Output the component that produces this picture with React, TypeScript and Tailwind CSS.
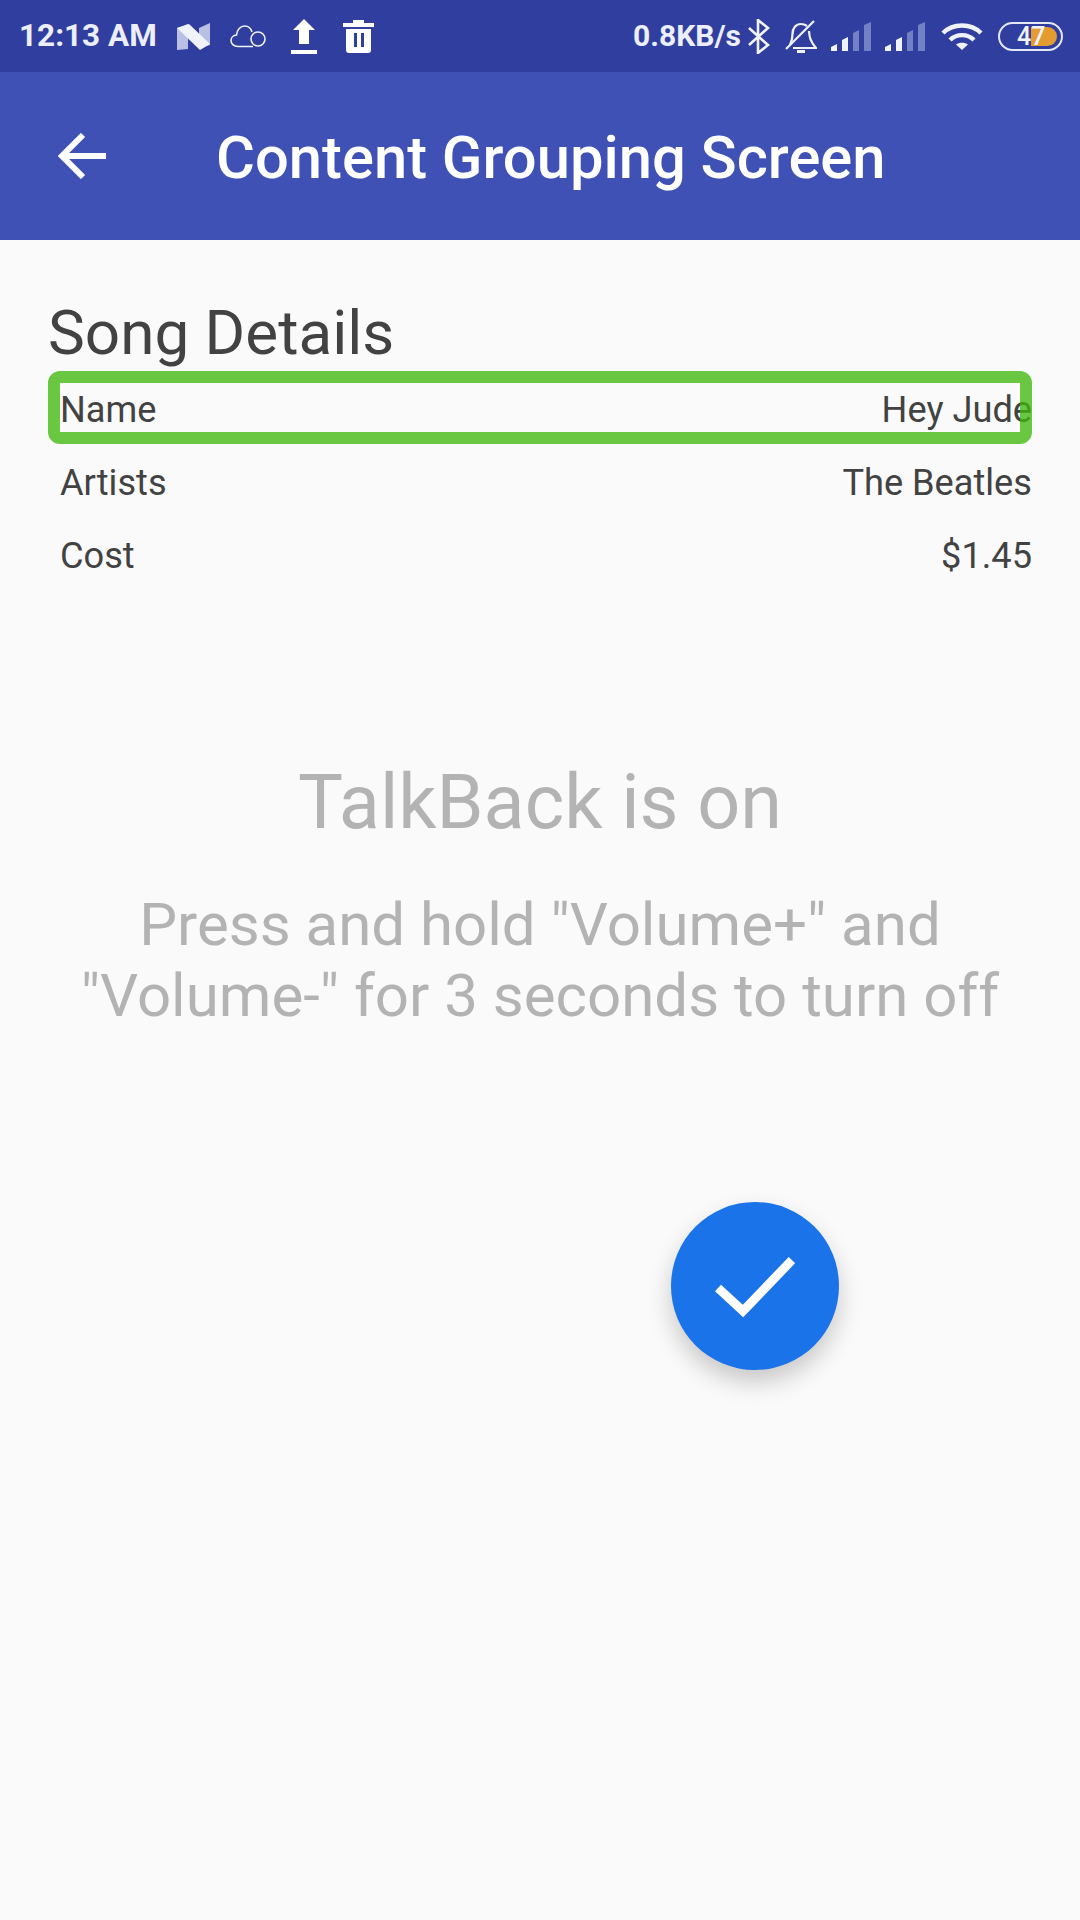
import React from "react";

function NLogo() {
	return (
		<svg width="33" height="27" viewBox="0 0 33 27" className="ml-[20px]">
			<path d="M0 5 L11 1 L11 26 L0 27Z" fill="#b9c0e3" />
			<path d="M22 5 L33 0 L33 22 L22 25Z" fill="#b9c0e3" />
			<path d="M0 5 L12 1 L33 21 L23 27Z" fill="#f1f3fb" />
		</svg>
	);
}

function CloudIcon() {
	return (
		<svg width="36" height="23" viewBox="0 0 36 23" fill="none" stroke="#f1f3fb" strokeWidth="1.6" className="ml-[20px]">
			<path d="M23 21.5 H8 C3.5 21.5 1 18.5 1 15.5 C1 12.5 3.5 10.2 6.5 10 C7 4.5 10.5 1 14.5 1 C18.5 1 21 3.5 22 7" />
			<circle cx="28" cy="14" r="7" />
		</svg>
	);
}

function UploadIcon() {
	return (
		<svg width="26" height="35" viewBox="0 0 26 35" fill="#ffffff" className="ml-[25px]">
			<path d="M13 0 L24 11 H18 V25 H8 V11 H2Z" />
			<rect x="0" y="31" width="26" height="4" />
		</svg>
	);
}

function TrashIcon() {
	return (
		<svg width="31" height="33" viewBox="0 0 31 33" className="ml-[26px]">
			<path d="M10 0 H21 V3 H31 V7 H0 V3 H10Z" fill="#ffffff" />
			<path d="M3 9 H28 V30 C28 32 27 33 25 33 H6 C4 33 3 32 3 30Z" fill="#ffffff" />
			<rect x="11" y="13" width="3" height="14" fill="#303f9f" />
			<rect x="18" y="13" width="3" height="14" fill="#303f9f" />
		</svg>
	);
}

function BluetoothIcon() {
	return (
		<svg width="22" height="35" viewBox="0 0 22 35" fill="none" stroke="#f1f3fb" strokeWidth="2.6" className="ml-[7px]">
			<path d="M1 9 L20 26 L10 34 V1 L20 9 L1 26" />
		</svg>
	);
}

function BellOffIcon() {
	return (
		<svg width="32" height="33" viewBox="0 0 32 33" fill="none" stroke="#f1f3fb" strokeWidth="2.2" className="ml-[15px]">
			<path d="M5 25 C7 21 7.5 18 7.5 14 C7.5 8 11 4 16 4 C18 4 20 4.5 22 6" />
			<path d="M24 11 C24.500 17 25 21 31 28 H8" />
			<path d="M1 29 L29 1" />
			<path d="M12 31.500 H20" strokeWidth="3" />
		</svg>
	);
}

function SignalIcon({ ml }: { ml: string }) {
	return (
		<svg width="40" height="29" viewBox="0 0 40 29" className={ml}>
			<path d="M0 29 V25 L6 22 V29Z" fill="#f1f3fb" />
			<path d="M11 29 V18 L17 15 V29Z" fill="#f1f3fb" />
			<path d="M22 29 V11 L28 8 V29Z" fill="#7280c4" />
			<path d="M33 29 V3 L40 0 V29Z" fill="#7280c4" />
		</svg>
	);
}

function WifiIcon() {
	return (
		<svg width="42" height="27" viewBox="0 0 42 27" fill="none" stroke="#f1f3fb" strokeWidth="4.4" className="ml-[16px]">
			<path d="M2 10 C12 0 30 0 40 10" />
			<path d="M9 17 C15.500 10.500 26.500 10.500 33 17" />
			<path d="M21 27 L15 21.500 C18 19 24 19 27 21.500Z" fill="#f1f3fb" stroke="none" />
		</svg>
	);
}

function BatteryIcon() {
	return (
		<div className="relative ml-[15px] h-[29px] w-[65px] rounded-full border-2 border-[#e4e7f6]">
			<div className="absolute top-[3px] left-[31px] h-[19px] w-[26px] rounded-r-full bg-[#e49b2f]" />
			<span className="absolute top-[-3px] left-[17px] text-[25px] leading-[31px] font-medium text-[#f1f3fb]">47</span>
		</div>
	);
}

function StatusBar() {
	return (
		<div className="flex h-[72px] items-center justify-between bg-[#303f9f] pr-[17px] pl-[19px]">
			<div className="flex items-center">
				<span className="text-[31.5px] leading-none font-bold text-[#eceef9]">12:13 AM</span>
				<NLogo />
				<CloudIcon />
				<UploadIcon />
				<TrashIcon />
			</div>
			<div className="flex items-center">
				<span className="text-[30px] leading-none font-bold text-[#eceef9]">0.8KB/s</span>
				<BluetoothIcon />
				<BellOffIcon />
				<SignalIcon ml="ml-[14px]" />
				<SignalIcon ml="ml-[14px]" />
				<WifiIcon />
				<BatteryIcon />
			</div>
		</div>
	);
}

function Toolbar() {
	return (
		<div className="flex h-[168px] items-center bg-[#3f51b5] pl-[58px]">
			<svg width="48" height="46" viewBox="0 0 48 46" fill="none" stroke="#ffffff" strokeWidth="6">
				<path d="M48 23 H5" />
				<path d="M25 2 L4 23 L25 44" />
			</svg>
			<h1 className="mt-[6px] ml-[110px] text-[59.7px] font-medium text-white">Content Grouping Screen</h1>
		</div>
	);
}

function DetailRow({ label, value }: { label: string; value: string }) {
	return (
		<div className="flex h-[73px] items-center justify-between">
			<span>{label}</span>
			<span>{value}</span>
		</div>
	);
}

export default function App() {
	return (
		<div className="relative h-[1920px] w-[1080px] overflow-hidden bg-[#fafafa] font-['Roboto',sans-serif]">
			<StatusBar />
			<Toolbar />
			<div className="px-[48px] pt-[58px]">
				<h2 className="h-[73px] text-[62px] leading-[70px] text-[#424242]">Song Details</h2>
				<div className="relative pl-[12px] text-[36.2px] text-[#424242]">
					<div className="pt-[3px]">
						<DetailRow label="Name" value="Hey Jude" />
						<DetailRow label="Artists" value="The Beatles" />
						<DetailRow label="Cost" value="$1.45" />
					</div>
					<div className="absolute top-0 left-0 h-[73px] w-[984px] rounded-[12px] border-[12px] border-[#3fb80b]/[0.77]" />
				</div>
			</div>
			<div className="mt-[165px] flex flex-col items-center text-center text-[#b3b3b3]">
				<div className="text-[75.5px] leading-[88px]">TalkBack is on</div>
				<div className="mt-[43px] text-[60px] leading-[71px]">
					Press and hold "Volume+" and
					<br />
					"Volume-" for 3 seconds to turn off
				</div>
			</div>
			<div className="absolute top-[1202px] left-[671px] flex h-[168px] w-[168px] items-center justify-center rounded-full bg-[#1a73e8] shadow-[0_12px_24px_rgba(0,0,0,0.2)]">
				<svg width="80" height="62" viewBox="0 0 80 62" fill="none" stroke="#ffffff" strokeWidth="9">
					<path d="M3 33 L28 56 L77 5" />
				</svg>
			</div>
		</div>
	);
}
